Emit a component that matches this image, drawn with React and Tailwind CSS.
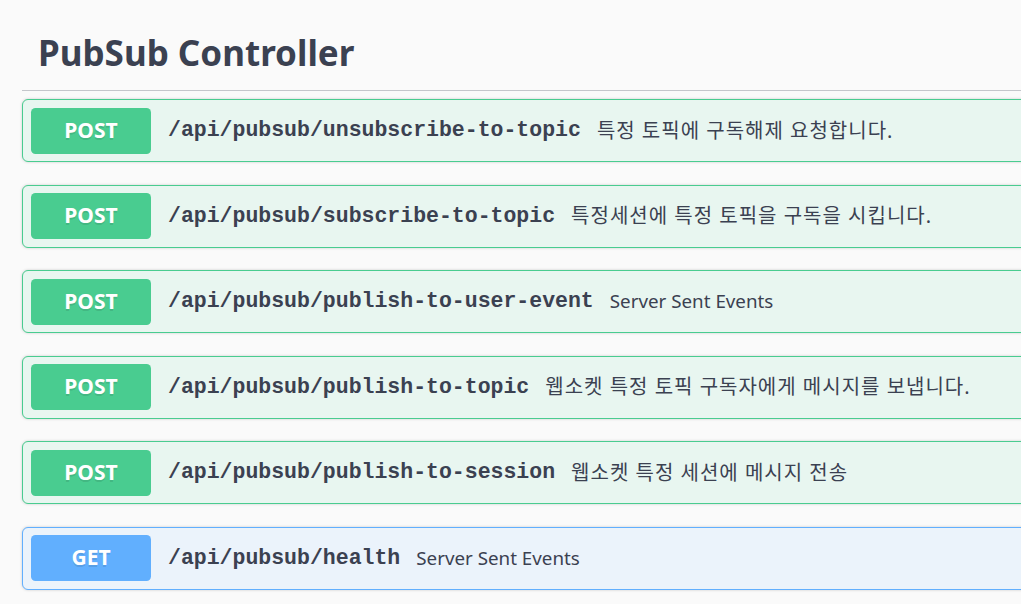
import React from "react";

const ops = [
  { method: "POST", path: "/api/pubsub/unsubscribe-to-topic", desc: "특정 토픽에 구독해제 요청합니다.", ko: true },
  { method: "POST", path: "/api/pubsub/subscribe-to-topic", desc: "특정세션에 특정 토픽을 구독을 시킵니다.", ko: true },
  { method: "POST", path: "/api/pubsub/publish-to-user-event", desc: "Server Sent Events" },
  { method: "POST", path: "/api/pubsub/publish-to-topic", desc: "웹소켓 특정 토픽 구독자에게 메시지를 보냅니다.", ko: true },
  { method: "POST", path: "/api/pubsub/publish-to-session", desc: "웹소켓 특정 세션에 메시지 전송", ko: true },
  { method: "GET", path: "/api/pubsub/health", desc: "Server Sent Events" },
];

const styles = {
  POST: {
    card: "border-[#49cc90] bg-[#e8f6f0]",
    badge: "bg-[#49cc90]",
  },
  GET: {
    card: "border-[#61affe] bg-[#ebf3fb]",
    badge: "bg-[#61affe]",
  },
};

const OpBlock = ({ op }) => {
  const s = styles[op.method];
  return (
    <div
      className={`flex items-center h-[63px] w-[1100px] border rounded-[6px] px-[8px] shadow-[0_0_3px_rgba(0,0,0,0.19)] ${s.card}`}
    >
      <span
        className={`flex items-center justify-center w-[120px] h-[46px] rounded-[4.5px] text-white font-bold text-[21px] [text-shadow:0_1.5px_0_rgba(0,0,0,0.1)] ${s.badge}`}
        style={{ fontFamily: "'Noto Sans', sans-serif" }}
      >
        {op.method}
      </span>
      <span
        className="pl-[17px] pr-[16px] text-[21.5px] font-semibold text-[#3b4151]"
        style={{ fontFamily: "'Liberation Mono', monospace" }}
      >
        {op.path}
      </span>
      {op.ko ? (
        <span
          className="text-[20px] tracking-[1px] text-[#3b4151]"
          style={{ fontFamily: "'Noto Sans', 'Noto Sans CJK KR', sans-serif" }}
        >
          {op.desc}
        </span>
      ) : (
        <span
          className="text-[18.8px] text-[#3b4151]"
          style={{ fontFamily: "'Noto Sans', 'Noto Sans CJK KR', sans-serif" }}
        >
          {op.desc}
        </span>
      )}
    </div>
  );
};

export default function App() {
  return (
    <div className="h-[604px] w-[1021px] overflow-hidden bg-[#fafafa]">
      <div className="ml-[22px] w-[1100px]">
        {/* Tag header */}
        <div className="h-[91px] flex items-end pb-[20px] pl-[16px] border-b border-[#c4c6cb]">
          <h3
            className="text-[35px] font-bold text-[#3b4151] leading-none"
            style={{ fontFamily: "'Noto Sans', 'Noto Sans CJK KR', sans-serif" }}
          >
            PubSub Controller
          </h3>
        </div>

        {/* Operations */}
        <div className="flex flex-col gap-[22.5px] pt-[8px]">
          {ops.map((op, i) => (
            <OpBlock key={i} op={op} />
          ))}
        </div>
      </div>
    </div>
  );
}
